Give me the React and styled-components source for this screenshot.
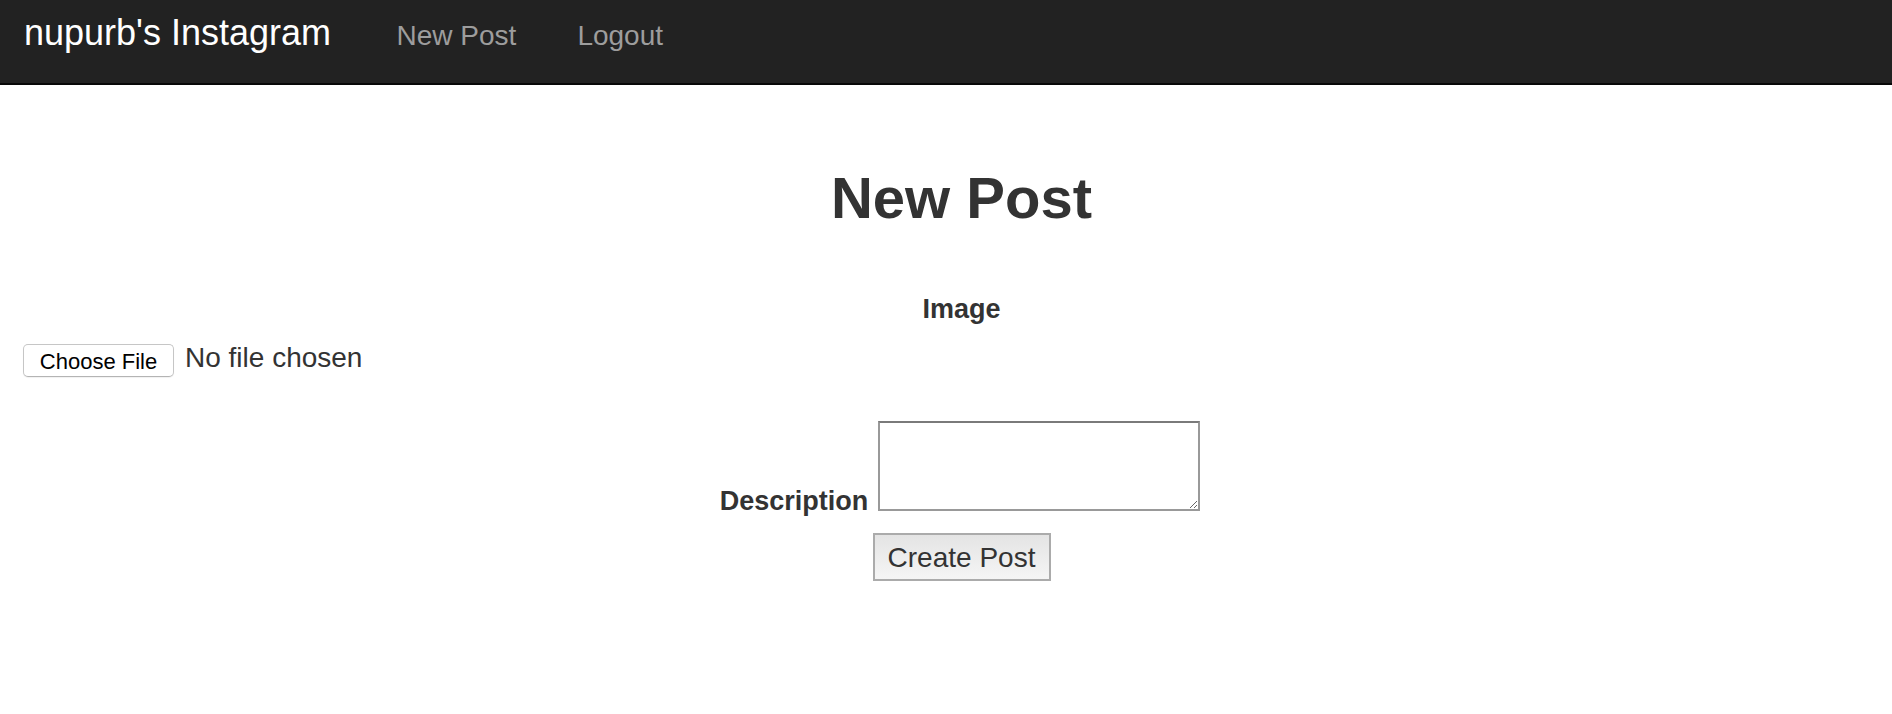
import React from 'react'
import styled, { createGlobalStyle } from 'styled-components';

const GlobalStyle = createGlobalStyle`
body {
    margin: 0;
    background: #fff;
    font-family: "Liberation Sans", Arial, Helvetica, sans-serif;
    color: #333;
}
`;

const Navbar = styled.nav`
display: flex;
align-items: baseline;
box-sizing: border-box;
height: 85px;
padding: 14.5px 0 0 24px;
background: #222;
border-bottom: 2px solid #080808;
`;

const Brand = styled.a`
font-size: 36px;
line-height: 36px;
color: #fff;
text-decoration: none;
margin-right: 35px;
`;

const NavLink = styled.a`
font-size: 28px;
line-height: 28px;
color: #9d9d9d;
text-decoration: none;
padding: 0 30.5px;
`;

const Main = styled.main`
display: flex;
flex-direction: column;
padding-left: 23px;
`;

const Heading = styled.h1`
margin: 80px 0 0;
padding-left: 8px;
text-align: center;
font-size: 58px;
line-height: 66px;
font-weight: 700;
color: #333;
`;

const FieldLabel = styled.label`
display: block;
margin-top: ${props => props.$top || 0}px;
padding-left: 8px;
text-align: center;
font-size: 27px;
line-height: 30px;
font-weight: 700;
color: #333;
`;

const FileRow = styled.div`
display: flex;
align-items: flex-start;
gap: 11px;
margin-top: 20.3px;
`;

const FileButton = styled.label`
box-sizing: border-box;
width: 151px;
height: 33px;
padding-top: 2px;
line-height: 29px;
text-align: center;
font-size: 22px;
color: #000;
background: #fff;
border: 1px solid #c6c6c6;
border-bottom-color: #b4b4b4;
border-radius: 5px;
box-shadow: 0 1px 1px rgba(0, 0, 0, 0.06);
cursor: pointer;

input {
    display: none;
}
`;

const FileName = styled.span`
font-size: 28px;
line-height: 27px;
color: #333;
`;

const DescriptionRow = styled.div`
display: flex;
justify-content: center;
align-items: flex-end;
gap: 10px;
margin-top: 43.4px;
padding-left: 5px;
`;

const InlineLabel = styled.label`
font-size: 27px;
line-height: 18.7px;
font-weight: 700;
color: #333;
`;

const TextArea = styled.textarea`
box-sizing: border-box;
width: 322px;
height: 90px;
margin: 0;
padding: 2px;
border: 2px solid #999;
border-top-color: #7a7a7a;
background: #fff;
font-family: inherit;
font-size: 26px;
outline: none;
`;

const SubmitButton = styled.button`
align-self: center;
box-sizing: border-box;
width: 178px;
height: 48px;
margin: 22.6px 0 0 8px;
padding: 2px 0 0;
line-height: 42px;
font-family: inherit;
font-size: 28px;
color: #333;
background: linear-gradient(#e4e4e4, #f5f5f5);
border: 2px solid #ababab;
border-radius: 0;
`;

export default function App() {
    return (
        <>
            <GlobalStyle />
            <Navbar>
                <Brand href='/'>nupurb's Instagram</Brand>
                <NavLink href='/posts/new'>New Post</NavLink>
                <NavLink href='/logout'>Logout</NavLink>
            </Navbar>
            <Main>
                <Heading>New Post</Heading>
                <FieldLabel $top={63}>Image</FieldLabel>
                <FileRow>
                    <FileButton>
                        Choose File
                        <input type='file' />
                    </FileButton>
                    <FileName>No file chosen</FileName>
                </FileRow>
                <DescriptionRow>
                    <InlineLabel htmlFor='description'>Description</InlineLabel>
                    <TextArea id='description' />
                </DescriptionRow>
                <SubmitButton type='submit'>Create Post</SubmitButton>
            </Main>
        </>
    )
}
